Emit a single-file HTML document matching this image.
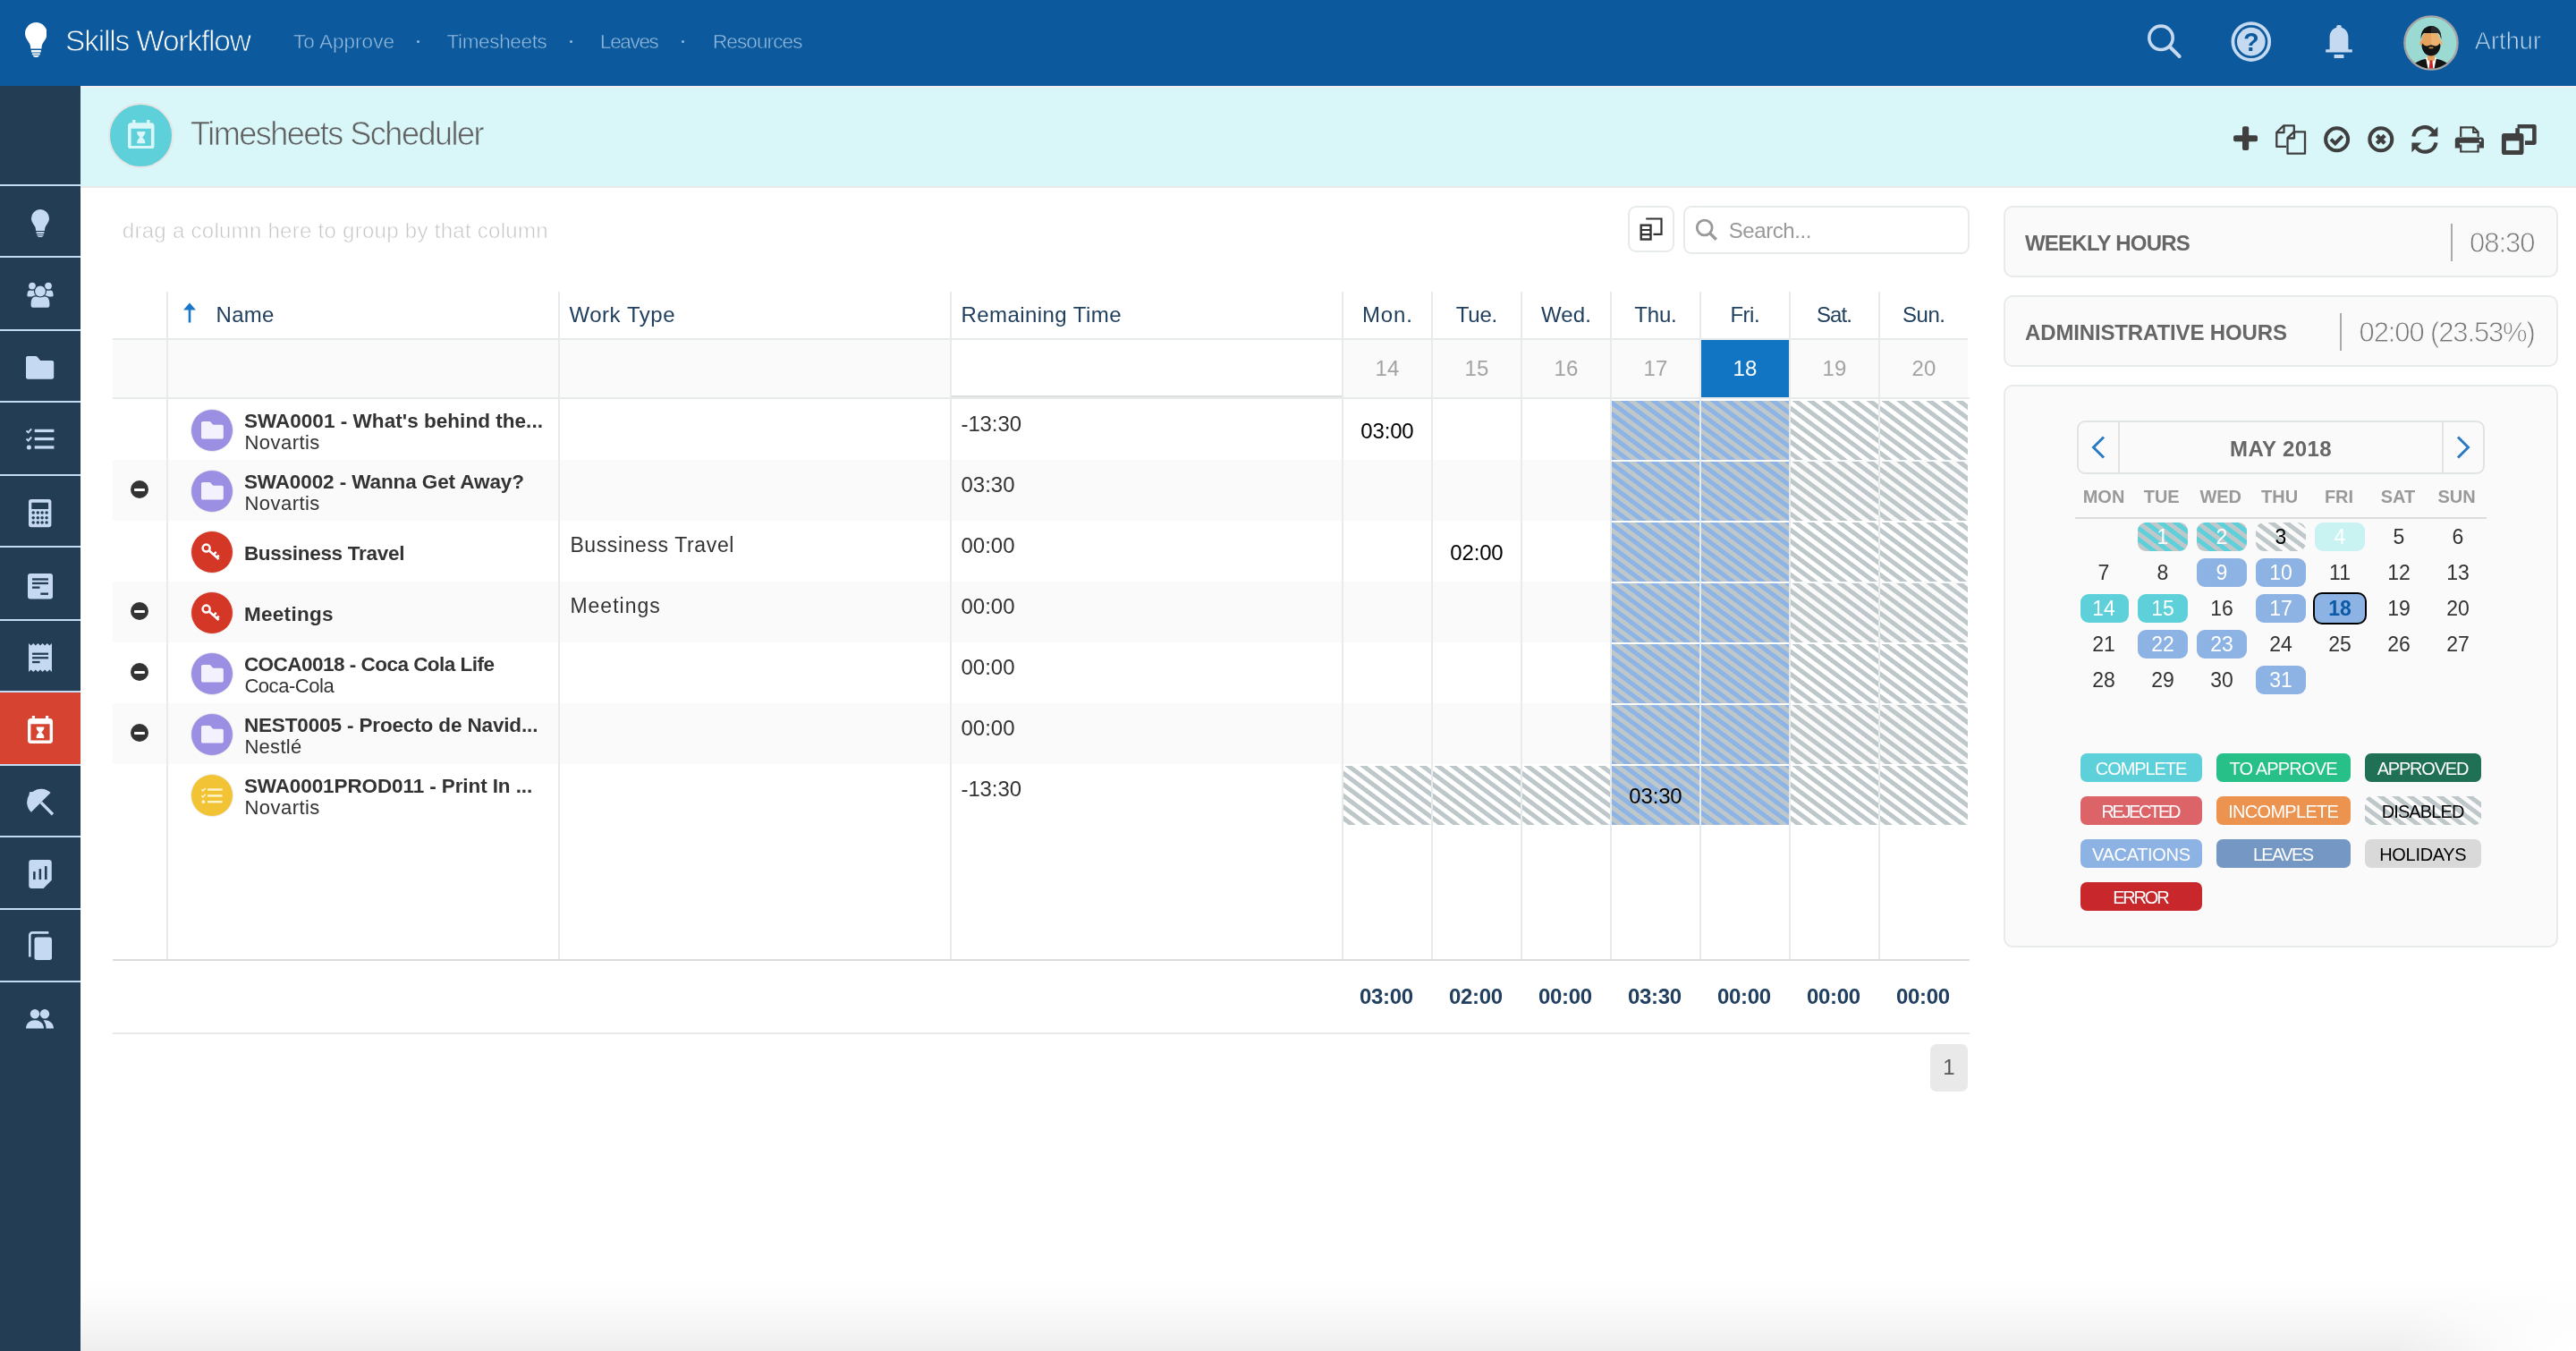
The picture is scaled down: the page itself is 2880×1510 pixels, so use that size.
<!DOCTYPE html>
<html lang="en"><head><meta charset="utf-8"><title>Timesheets Scheduler - Skills Workflow</title>
<style>
html,body{margin:0;padding:0;}
body{width:2880px;height:1510px;overflow:hidden;background:#fff;position:relative;font-family:"Liberation Sans", sans-serif;}
#app{position:absolute;left:0;top:0;width:2880px;height:1510px;will-change:transform;}
.t{position:absolute;white-space:nowrap;line-height:1;font-family:"Liberation Sans", sans-serif;}
.b{position:absolute;box-sizing:border-box;}

.st-b{background:repeating-linear-gradient(37deg,#8db4e4 0,#8db4e4 3.2px,#bec7c9 3.8px,#bec7c9 8.2px,#8db4e4 8.8px,#8db4e4 10px);}
.st-w{background:repeating-linear-gradient(37deg,rgba(190,199,201,0) 0,rgba(190,199,201,0) 3.2px,#bec7c9 3.8px,#bec7c9 8.2px,rgba(190,199,201,0) 8.8px,rgba(190,199,201,0) 10px);}
.st-t{background:repeating-linear-gradient(37deg,#5dd0d9 0,#5dd0d9 3.2px,#bec7c9 3.8px,#bec7c9 8.2px,#5dd0d9 8.8px,#5dd0d9 10px);}

@media (max-width:1600px){#app{transform:scale(.5);transform-origin:0 0;}}
</style></head><body>
<div id="app">
<div class="b" style="left:0px;top:0px;width:2880px;height:96px;background:#0c5a9d;"></div>
<div class="b" style="left:90px;top:96px;width:2790px;height:112px;background:#d9f6f9;"></div>
<div class="b" style="left:90px;top:208px;width:2790px;height:2px;background:#e9e9e9;"></div>
<div class="b" style="left:90px;top:96px;width:2790px;height:2px;background:#f1efef;"></div>
<div class="b" style="left:90px;top:1428px;width:2790px;height:82px;background:linear-gradient(to bottom,#ffffff 0,#fdfdfd 25%,#f8f8f8 55%,#f2f2f2 82%,#eeeeee 100%);"></div>
<div class="b" style="left:2600px;top:1428px;width:280px;height:82px;background:radial-gradient(ellipse 200px 100px at 100% 100%,#fff 0,rgba(255,255,255,.8) 35%,rgba(255,255,255,0) 100%);"></div>
<div class="b" style="left:0px;top:96px;width:90px;height:1414px;background:#233d54;"></div>
<div class="b" style="left:0px;top:206px;width:90px;height:2px;background:#c5dcf5;"></div>
<div class="b" style="left:0px;top:286px;width:90px;height:2px;background:#c5dcf5;"></div>
<div class="b" style="left:0px;top:368px;width:90px;height:2px;background:#c5dcf5;"></div>
<div class="b" style="left:0px;top:448px;width:90px;height:2px;background:#c5dcf5;"></div>
<div class="b" style="left:0px;top:530px;width:90px;height:2px;background:#c5dcf5;"></div>
<div class="b" style="left:0px;top:610px;width:90px;height:2px;background:#c5dcf5;"></div>
<div class="b" style="left:0px;top:692px;width:90px;height:2px;background:#c5dcf5;"></div>
<div class="b" style="left:0px;top:772px;width:90px;height:2px;background:#c5dcf5;"></div>
<div class="b" style="left:0px;top:854px;width:90px;height:2px;background:#c5dcf5;"></div>
<div class="b" style="left:0px;top:934px;width:90px;height:2px;background:#c5dcf5;"></div>
<div class="b" style="left:0px;top:1015px;width:90px;height:2px;background:#c5dcf5;"></div>
<div class="b" style="left:0px;top:1096px;width:90px;height:2px;background:#c5dcf5;"></div>
<div class="b" style="left:0px;top:774px;width:90px;height:80px;background:#d64431;"></div>
<div class="t" style="left:73.0px;top:29px;font-size:33.5px;color:#fff;letter-spacing:-1.19px;-webkit-text-stroke:.9px #0c5a9d;">Skills Workflow</div>
<div class="t" style="left:328.0px;top:36px;font-size:22.5px;color:#96bbde;letter-spacing:0.04px;-webkit-text-stroke:.5px #0c5a9d;">To Approve</div>
<div class="t" style="left:499.5px;top:36px;font-size:22.5px;color:#96bbde;letter-spacing:-0.35px;-webkit-text-stroke:.5px #0c5a9d;">Timesheets</div>
<div class="t" style="left:671.0px;top:36px;font-size:22.5px;color:#96bbde;letter-spacing:-1.35px;-webkit-text-stroke:.5px #0c5a9d;">Leaves</div>
<div class="t" style="left:796.9px;top:36px;font-size:22.5px;color:#96bbde;letter-spacing:-0.87px;-webkit-text-stroke:.5px #0c5a9d;">Resources</div>
<div class="b" style="left:466.2px;top:44.5px;width:3px;height:3px;background:#96bbde;border-radius:50%;"></div>
<div class="b" style="left:636.9px;top:44.5px;width:3px;height:3px;background:#96bbde;border-radius:50%;"></div>
<div class="b" style="left:762.4px;top:44.5px;width:3px;height:3px;background:#96bbde;border-radius:50%;"></div>
<div class="t" style="left:2766.8px;top:33px;font-size:27px;color:#c5daf0;letter-spacing:0.13px;-webkit-text-stroke:.8px #0c5a9d;">Arthur</div>
<div class="b" style="left:120.5px;top:114.5px;width:73px;height:73px;background:#5dd0d9;border-radius:50%;border:2px solid #e6e4e4;"></div>
<div class="t" style="left:213.0px;top:132px;font-size:36px;color:#606060;letter-spacing:-1.49px;-webkit-text-stroke:.7px #d9f6f9;">Timesheets Scheduler</div>
<div class="t" style="left:136.8px;top:246px;font-size:24px;color:#c6c6c6;letter-spacing:0.28px;-webkit-text-stroke:.6px #fff;">drag a column here to group by that column</div>
<div class="b" style="left:1820px;top:230px;width:52px;height:52px;background:#fff;border:2px solid #e8ebeb;border-radius:9px;"></div>
<div class="b" style="left:1882px;top:230px;width:320px;height:54px;background:#fff;border:2px solid #e8ebeb;border-radius:9px;"></div>
<div class="t" style="left:1932.7px;top:246px;font-size:24px;color:#999;letter-spacing:-0.41px;">Search...</div>
<div class="b" style="left:126px;top:378px;width:2074px;height:2px;background:#e8ebeb;"></div>
<div class="b" style="left:126px;top:380px;width:2074px;height:64px;background:#fafafa;"></div>
<div class="b" style="left:1064px;top:380px;width:436px;height:62px;background:#fff;"></div>
<div class="b" style="left:1064px;top:442px;width:436px;height:2px;background:#dedede;"></div>
<div class="b" style="left:126px;top:444px;width:2076px;height:2px;background:#e8ebeb;"></div>
<div class="b" style="left:126px;top:514px;width:2074px;height:68px;background:#fafafa;"></div>
<div class="b" style="left:126px;top:650px;width:2074px;height:68px;background:#fafafa;"></div>
<div class="b" style="left:126px;top:786px;width:2074px;height:68px;background:#fafafa;"></div>
<div class="b" style="left:1902px;top:380px;width:98px;height:64px;background:#1175c4;"></div>
<div class="b st-b" style="left:1802px;top:448px;width:98px;height:66px"></div>
<div class="b st-b" style="left:1902px;top:448px;width:98px;height:66px"></div>
<div class="b st-w" style="left:2002px;top:448px;width:98px;height:66px"></div>
<div class="b st-w" style="left:2102px;top:448px;width:98px;height:66px"></div>
<div class="b st-b" style="left:1802px;top:516px;width:98px;height:66px"></div>
<div class="b st-b" style="left:1902px;top:516px;width:98px;height:66px"></div>
<div class="b st-w" style="left:2002px;top:516px;width:98px;height:66px"></div>
<div class="b st-w" style="left:2102px;top:516px;width:98px;height:66px"></div>
<div class="b st-b" style="left:1802px;top:584px;width:98px;height:66px"></div>
<div class="b st-b" style="left:1902px;top:584px;width:98px;height:66px"></div>
<div class="b st-w" style="left:2002px;top:584px;width:98px;height:66px"></div>
<div class="b st-w" style="left:2102px;top:584px;width:98px;height:66px"></div>
<div class="b st-b" style="left:1802px;top:652px;width:98px;height:66px"></div>
<div class="b st-b" style="left:1902px;top:652px;width:98px;height:66px"></div>
<div class="b st-w" style="left:2002px;top:652px;width:98px;height:66px"></div>
<div class="b st-w" style="left:2102px;top:652px;width:98px;height:66px"></div>
<div class="b st-b" style="left:1802px;top:720px;width:98px;height:66px"></div>
<div class="b st-b" style="left:1902px;top:720px;width:98px;height:66px"></div>
<div class="b st-w" style="left:2002px;top:720px;width:98px;height:66px"></div>
<div class="b st-w" style="left:2102px;top:720px;width:98px;height:66px"></div>
<div class="b st-b" style="left:1802px;top:788px;width:98px;height:66px"></div>
<div class="b st-b" style="left:1902px;top:788px;width:98px;height:66px"></div>
<div class="b st-w" style="left:2002px;top:788px;width:98px;height:66px"></div>
<div class="b st-w" style="left:2102px;top:788px;width:98px;height:66px"></div>
<div class="b st-w" style="left:1502px;top:856px;width:98px;height:66px"></div>
<div class="b st-w" style="left:1602px;top:856px;width:98px;height:66px"></div>
<div class="b st-w" style="left:1702px;top:856px;width:98px;height:66px"></div>
<div class="b st-b" style="left:1802px;top:856px;width:98px;height:66px"></div>
<div class="b st-b" style="left:1902px;top:856px;width:98px;height:66px"></div>
<div class="b st-w" style="left:2002px;top:856px;width:98px;height:66px"></div>
<div class="b st-w" style="left:2102px;top:856px;width:98px;height:66px"></div>
<div class="b" style="left:186px;top:326px;width:2px;height:748px;background:#e8ebeb;"></div>
<div class="b" style="left:624px;top:326px;width:2px;height:748px;background:#e8ebeb;"></div>
<div class="b" style="left:1062px;top:326px;width:2px;height:748px;background:#e8ebeb;"></div>
<div class="b" style="left:1500px;top:326px;width:2px;height:748px;background:#e8ebeb;"></div>
<div class="b" style="left:1600px;top:326px;width:2px;height:748px;background:#e8ebeb;"></div>
<div class="b" style="left:1700px;top:326px;width:2px;height:748px;background:#e8ebeb;"></div>
<div class="b" style="left:1800px;top:326px;width:2px;height:748px;background:#e8ebeb;"></div>
<div class="b" style="left:1900px;top:326px;width:2px;height:748px;background:#e8ebeb;"></div>
<div class="b" style="left:2000px;top:326px;width:2px;height:748px;background:#e8ebeb;"></div>
<div class="b" style="left:2100px;top:326px;width:2px;height:748px;background:#e8ebeb;"></div>
<div class="b" style="left:126px;top:1072px;width:2076px;height:2px;background:#dcdcdc;"></div>
<div class="b" style="left:126px;top:1154px;width:2076px;height:2px;background:#e8e8e8;"></div>
<div class="b" style="left:2158px;top:1167px;width:42px;height:53px;background:#e9e9e9;border-radius:7px;"></div>
<div class="t" style="left:2172.3px;top:1181px;font-size:24px;color:#555;">1</div>
<div class="t" style="left:241.6px;top:340px;font-size:24px;color:#21405f;letter-spacing:0.26px;">Name</div>
<div class="t" style="left:636.5px;top:340px;font-size:24px;color:#21405f;letter-spacing:0.52px;">Work Type</div>
<div class="t" style="left:1074.5px;top:340px;font-size:24px;color:#21405f;letter-spacing:0.43px;">Remaining Time</div>
<div class="t" style="left:1523.0px;top:340px;font-size:24px;color:#21405f;letter-spacing:0.88px;">Mon.</div>
<div class="t" style="left:1537.6px;top:400px;font-size:24px;color:#a3a3a3;">14</div>
<div class="t" style="left:1627.8px;top:340px;font-size:24px;color:#21405f;letter-spacing:-0.25px;">Tue.</div>
<div class="t" style="left:1637.6px;top:400px;font-size:24px;color:#a3a3a3;">15</div>
<div class="t" style="left:1723.0px;top:340px;font-size:24px;color:#21405f;letter-spacing:0.14px;">Wed.</div>
<div class="t" style="left:1737.6px;top:400px;font-size:24px;color:#a3a3a3;">16</div>
<div class="t" style="left:1827.3px;top:340px;font-size:24px;color:#21405f;letter-spacing:-0.21px;">Thu.</div>
<div class="t" style="left:1837.6px;top:400px;font-size:24px;color:#a3a3a3;">17</div>
<div class="t" style="left:1934.4px;top:340px;font-size:24px;color:#21405f;letter-spacing:-0.49px;">Fri.</div>
<div class="t" style="left:1937.6px;top:400px;font-size:24px;color:#fff;">18</div>
<div class="t" style="left:2031.0px;top:340px;font-size:24px;color:#21405f;letter-spacing:-0.90px;">Sat.</div>
<div class="t" style="left:2037.6px;top:400px;font-size:24px;color:#a3a3a3;">19</div>
<div class="t" style="left:2127.0px;top:340px;font-size:24px;color:#21405f;letter-spacing:-0.46px;">Sun.</div>
<div class="t" style="left:2137.6px;top:400px;font-size:24px;color:#a3a3a3;">20</div>
<svg class="b" style="left:204px;top:338px;" width="16" height="24" viewBox="0 0 16 24"><path d="M8 0.5 L15 8.5 H9.3 V22.5 H6.7 V8.5 H1 Z" fill="#1976c8"/></svg>
<div class="b" style="left:213px;top:457px;width:48px;height:48px;background:#9b8fe3;border-radius:50%;border:1.5px solid #ececec;"></div>
<div class="t" style="left:272.9px;top:460px;font-size:22.5px;color:#333;font-weight:700;letter-spacing:0.04px;">SWA0001 - What's behind the...</div>
<div class="t" style="left:273.4px;top:484px;font-size:22px;color:#333;letter-spacing:0.47px;">Novartis</div>
<div class="t" style="left:1074.5px;top:462px;font-size:24px;color:#333;letter-spacing:-0.11px;">-13:30</div>
<div class="b" style="left:213px;top:525px;width:48px;height:48px;background:#9b8fe3;border-radius:50%;border:1.5px solid #ececec;"></div>
<div class="b" style="left:146px;top:537.3px;width:20px;height:20px;background:#333;border-radius:50%;"></div>
<div class="b" style="left:150px;top:545.6px;width:12px;height:3.4px;background:#fff;border-radius:1px;"></div>
<div class="t" style="left:272.9px;top:528px;font-size:22.5px;color:#333;font-weight:700;letter-spacing:-0.10px;">SWA0002 - Wanna Get Away?</div>
<div class="t" style="left:273.4px;top:552px;font-size:22px;color:#333;letter-spacing:0.47px;">Novartis</div>
<div class="t" style="left:1074.5px;top:530px;font-size:24px;color:#333;letter-spacing:-0.02px;">03:30</div>
<div class="b" style="left:213px;top:593px;width:48px;height:48px;background:#d43726;border-radius:50%;border:1.5px solid #ececec;"></div>
<div class="t" style="left:272.9px;top:608px;font-size:22.5px;color:#333;font-weight:700;letter-spacing:-0.29px;">Bussiness Travel</div>
<div class="t" style="left:637.4px;top:598px;font-size:23px;color:#333;letter-spacing:0.61px;">Bussiness Travel</div>
<div class="t" style="left:1074.5px;top:598px;font-size:24px;color:#333;letter-spacing:-0.02px;">00:00</div>
<div class="b" style="left:213px;top:661px;width:48px;height:48px;background:#d43726;border-radius:50%;border:1.5px solid #ececec;"></div>
<div class="b" style="left:146px;top:673.3px;width:20px;height:20px;background:#333;border-radius:50%;"></div>
<div class="b" style="left:150px;top:681.6px;width:12px;height:3.4px;background:#fff;border-radius:1px;"></div>
<div class="t" style="left:272.9px;top:676px;font-size:22.5px;color:#333;font-weight:700;letter-spacing:0.31px;">Meetings</div>
<div class="t" style="left:637.4px;top:666px;font-size:23px;color:#333;letter-spacing:1.01px;">Meetings</div>
<div class="t" style="left:1074.5px;top:666px;font-size:24px;color:#333;letter-spacing:-0.02px;">00:00</div>
<div class="b" style="left:213px;top:729px;width:48px;height:48px;background:#9b8fe3;border-radius:50%;border:1.5px solid #ececec;"></div>
<div class="b" style="left:146px;top:741.3px;width:20px;height:20px;background:#333;border-radius:50%;"></div>
<div class="b" style="left:150px;top:749.6px;width:12px;height:3.4px;background:#fff;border-radius:1px;"></div>
<div class="t" style="left:272.9px;top:732px;font-size:22.5px;color:#333;font-weight:700;letter-spacing:-0.52px;">COCA0018 - Coca Cola Life</div>
<div class="t" style="left:273.4px;top:756px;font-size:22px;color:#333;letter-spacing:-0.45px;">Coca-Cola</div>
<div class="t" style="left:1074.5px;top:734px;font-size:24px;color:#333;letter-spacing:-0.02px;">00:00</div>
<div class="b" style="left:213px;top:797px;width:48px;height:48px;background:#9b8fe3;border-radius:50%;border:1.5px solid #ececec;"></div>
<div class="b" style="left:146px;top:809.3px;width:20px;height:20px;background:#333;border-radius:50%;"></div>
<div class="b" style="left:150px;top:817.6px;width:12px;height:3.4px;background:#fff;border-radius:1px;"></div>
<div class="t" style="left:272.9px;top:800px;font-size:22.5px;color:#333;font-weight:700;letter-spacing:-0.14px;">NEST0005 - Proecto de Navid...</div>
<div class="t" style="left:273.4px;top:824px;font-size:22px;color:#333;letter-spacing:0.29px;">Nestlé</div>
<div class="t" style="left:1074.5px;top:802px;font-size:24px;color:#333;letter-spacing:-0.02px;">00:00</div>
<div class="b" style="left:213px;top:865px;width:48px;height:48px;background:#f2c435;border-radius:50%;border:1.5px solid #ececec;"></div>
<div class="t" style="left:272.9px;top:868px;font-size:22.5px;color:#333;font-weight:700;letter-spacing:-0.10px;">SWA0001PROD011 - Print In ...</div>
<div class="t" style="left:273.4px;top:892px;font-size:22px;color:#333;letter-spacing:0.47px;">Novartis</div>
<div class="t" style="left:1074.5px;top:870px;font-size:24px;color:#333;letter-spacing:-0.11px;">-13:30</div>
<div class="t" style="left:1521.3px;top:470px;font-size:24px;color:#000;letter-spacing:-0.17px;">03:00</div>
<div class="t" style="left:1621.3px;top:606px;font-size:24px;color:#000;letter-spacing:-0.17px;">02:00</div>
<div class="t" style="left:1821.3px;top:878px;font-size:24px;color:#000;letter-spacing:-0.17px;">03:30</div>
<div class="t" style="left:1520.0px;top:1102px;font-size:24px;color:#21405f;font-weight:700;letter-spacing:-0.35px;">03:00</div>
<div class="t" style="left:1620.0px;top:1102px;font-size:24px;color:#21405f;font-weight:700;letter-spacing:-0.35px;">02:00</div>
<div class="t" style="left:1720.0px;top:1102px;font-size:24px;color:#21405f;font-weight:700;letter-spacing:-0.35px;">00:00</div>
<div class="t" style="left:1820.0px;top:1102px;font-size:24px;color:#21405f;font-weight:700;letter-spacing:-0.35px;">03:30</div>
<div class="t" style="left:1920.0px;top:1102px;font-size:24px;color:#21405f;font-weight:700;letter-spacing:-0.35px;">00:00</div>
<div class="t" style="left:2020.0px;top:1102px;font-size:24px;color:#21405f;font-weight:700;letter-spacing:-0.35px;">00:00</div>
<div class="t" style="left:2120.0px;top:1102px;font-size:24px;color:#21405f;font-weight:700;letter-spacing:-0.35px;">00:00</div>
<div class="b" style="left:2240px;top:230px;width:620px;height:80px;background:#fafafa;border:2px solid #e8ebeb;border-radius:10px;"></div>
<div class="b" style="left:2240px;top:330px;width:620px;height:80px;background:#fafafa;border:2px solid #e8ebeb;border-radius:10px;"></div>
<div class="b" style="left:2240px;top:430px;width:620px;height:629px;background:#fafafa;border:2px solid #e8ebeb;border-radius:10px;"></div>
<div class="t" style="left:2264.0px;top:260px;font-size:24px;color:#666;font-weight:700;letter-spacing:-0.78px;">WEEKLY HOURS</div>
<div class="b" style="left:2740px;top:250px;width:2px;height:42px;background:#ababab;"></div>
<div class="t" style="left:2761.0px;top:256px;font-size:31px;color:#777;letter-spacing:-1.04px;-webkit-text-stroke:.8px #fafafa;">08:30</div>
<div class="t" style="left:2264.0px;top:360px;font-size:24px;color:#666;font-weight:700;letter-spacing:-0.14px;">ADMINISTRATIVE HOURS</div>
<div class="b" style="left:2616px;top:350px;width:2px;height:42px;background:#ababab;"></div>
<div class="t" style="left:2637.6px;top:356px;font-size:31px;color:#777;letter-spacing:-1.13px;-webkit-text-stroke:.8px #fafafa;">02:00 (23.53%)</div>
<div class="b" style="left:2322px;top:470px;width:456px;height:60px;background:#fafafa;border:2px solid #e1e4e4;border-radius:9px;"></div>
<div class="b" style="left:2368px;top:472px;width:2px;height:56px;background:#e1e4e4;"></div>
<div class="b" style="left:2730px;top:472px;width:2px;height:56px;background:#e1e4e4;"></div>
<div class="t" style="left:2493.0px;top:490px;font-size:24px;color:#666;font-weight:700;letter-spacing:0.42px;">MAY 2018</div>
<svg class="b" style="left:2334px;top:484px;" width="24" height="32" viewBox="0 0 24 32"><path d="M18 4.5 L6.5 16 L18 27.5" fill="none" stroke="#2b7bc4" stroke-width="3"/></svg>
<svg class="b" style="left:2742px;top:484px;" width="24" height="32" viewBox="0 0 24 32"><path d="M6 4.5 L17.5 16 L6 27.5" fill="none" stroke="#2b7bc4" stroke-width="3"/></svg>
<div class="t" style="left:2328.7px;top:545px;font-size:20px;color:#999;font-weight:700;">MON</div>
<div class="t" style="left:2396.7px;top:545px;font-size:20px;color:#999;font-weight:700;">TUE</div>
<div class="t" style="left:2459.4px;top:545px;font-size:20px;color:#999;font-weight:700;">WED</div>
<div class="t" style="left:2528.0px;top:545px;font-size:20px;color:#999;font-weight:700;">THU</div>
<div class="t" style="left:2598.9px;top:545px;font-size:20px;color:#999;font-weight:700;">FRI</div>
<div class="t" style="left:2661.7px;top:545px;font-size:20px;color:#999;font-weight:700;">SAT</div>
<div class="t" style="left:2725.5px;top:545px;font-size:20px;color:#999;font-weight:700;">SUN</div>
<div class="b" style="left:2320px;top:578px;width:460px;height:2px;background:#dcdcdc;"></div>
<div class="b st-t" style="left:2390px;top:584px;width:56px;height:32px;border-radius:9px"></div>
<div class="t" style="left:2411.6px;top:589px;font-size:23px;color:#fff;">1</div>
<div class="b st-t" style="left:2456px;top:584px;width:56px;height:32px;border-radius:9px"></div>
<div class="t" style="left:2477.6px;top:589px;font-size:23px;color:#fff;">2</div>
<div class="b st-w" style="left:2522px;top:584px;width:56px;height:32px;border-radius:9px"></div>
<div class="t" style="left:2543.6px;top:589px;font-size:23px;color:#000;">3</div>
<div class="b" style="left:2588px;top:584px;width:56px;height:32px;background:#c9f3f3;border-radius:9px;"></div>
<div class="t" style="left:2609.6px;top:589px;font-size:23px;color:#fff;">4</div>
<div class="t" style="left:2675.6px;top:589px;font-size:23px;color:#333;">5</div>
<div class="t" style="left:2741.6px;top:589px;font-size:23px;color:#333;">6</div>
<div class="t" style="left:2345.6px;top:629px;font-size:23px;color:#333;">7</div>
<div class="t" style="left:2411.6px;top:629px;font-size:23px;color:#333;">8</div>
<div class="b" style="left:2456px;top:624px;width:56px;height:32px;background:#8db3e4;border-radius:9px;"></div>
<div class="t" style="left:2477.6px;top:629px;font-size:23px;color:#fff;">9</div>
<div class="b" style="left:2522px;top:624px;width:56px;height:32px;background:#8db3e4;border-radius:9px;"></div>
<div class="t" style="left:2537.2px;top:629px;font-size:23px;color:#fff;">10</div>
<div class="t" style="left:2604.1px;top:629px;font-size:23px;color:#333;">11</div>
<div class="t" style="left:2669.2px;top:629px;font-size:23px;color:#333;">12</div>
<div class="t" style="left:2735.2px;top:629px;font-size:23px;color:#333;">13</div>
<div class="b" style="left:2326px;top:664px;width:54px;height:32px;background:#5dd0d9;border-radius:9px;"></div>
<div class="t" style="left:2339.2px;top:669px;font-size:23px;color:#fff;">14</div>
<div class="b" style="left:2390px;top:664px;width:56px;height:32px;background:#5dd0d9;border-radius:9px;"></div>
<div class="t" style="left:2405.2px;top:669px;font-size:23px;color:#fff;">15</div>
<div class="t" style="left:2471.2px;top:669px;font-size:23px;color:#333;">16</div>
<div class="b" style="left:2522px;top:664px;width:56px;height:32px;background:#8db3e4;border-radius:9px;"></div>
<div class="t" style="left:2537.2px;top:669px;font-size:23px;color:#fff;">17</div>
<div class="b" style="left:2586px;top:662px;width:60px;height:36px;background:#8db3e4;border:2.5px solid #000;border-radius:10px;"></div>
<div class="t" style="left:2603.2px;top:669px;font-size:23px;color:#0b5aa5;font-weight:700;">18</div>
<div class="t" style="left:2669.2px;top:669px;font-size:23px;color:#333;">19</div>
<div class="t" style="left:2735.2px;top:669px;font-size:23px;color:#333;">20</div>
<div class="t" style="left:2339.2px;top:709px;font-size:23px;color:#333;">21</div>
<div class="b" style="left:2390px;top:704px;width:56px;height:32px;background:#8db3e4;border-radius:9px;"></div>
<div class="t" style="left:2405.2px;top:709px;font-size:23px;color:#fff;">22</div>
<div class="b" style="left:2456px;top:704px;width:56px;height:32px;background:#8db3e4;border-radius:9px;"></div>
<div class="t" style="left:2471.2px;top:709px;font-size:23px;color:#fff;">23</div>
<div class="t" style="left:2537.2px;top:709px;font-size:23px;color:#333;">24</div>
<div class="t" style="left:2603.2px;top:709px;font-size:23px;color:#333;">25</div>
<div class="t" style="left:2669.2px;top:709px;font-size:23px;color:#333;">26</div>
<div class="t" style="left:2735.2px;top:709px;font-size:23px;color:#333;">27</div>
<div class="t" style="left:2339.2px;top:749px;font-size:23px;color:#333;">28</div>
<div class="t" style="left:2405.2px;top:749px;font-size:23px;color:#333;">29</div>
<div class="t" style="left:2471.2px;top:749px;font-size:23px;color:#333;">30</div>
<div class="b" style="left:2522px;top:744px;width:56px;height:32px;background:#8db3e4;border-radius:9px;"></div>
<div class="t" style="left:2537.2px;top:749px;font-size:23px;color:#fff;">31</div>
<div class="b" style="left:2326px;top:842px;width:136px;height:32px;background:#5dd0d9;border-radius:7px;"></div>
<div class="t" style="left:2342.8px;top:849px;font-size:20px;color:#fff;letter-spacing:-1.08px;">COMPLETE</div>
<div class="b" style="left:2478px;top:842px;width:150px;height:32px;background:#27c088;border-radius:7px;"></div>
<div class="t" style="left:2492.4px;top:849px;font-size:20px;color:#fff;letter-spacing:-0.82px;">TO APPROVE</div>
<div class="b" style="left:2644px;top:842px;width:130px;height:32px;background:#1f7055;border-radius:7px;"></div>
<div class="t" style="left:2657.7px;top:849px;font-size:20px;color:#fff;letter-spacing:-1.21px;">APPROVED</div>
<div class="b" style="left:2326px;top:890px;width:136px;height:32px;background:#dc6468;border-radius:7px;"></div>
<div class="t" style="left:2349.4px;top:897px;font-size:20px;color:#fff;letter-spacing:-2.35px;">REJECTED</div>
<div class="b" style="left:2478px;top:890px;width:150px;height:32px;background:#ec9350;border-radius:7px;"></div>
<div class="t" style="left:2491.2px;top:897px;font-size:20px;color:#fff;letter-spacing:-0.70px;">INCOMPLETE</div>
<div class="b st-w" style="left:2644px;top:890px;width:130px;height:32px;border-radius:7px"></div>
<div class="t" style="left:2662.7px;top:897px;font-size:20px;color:#000;letter-spacing:-0.89px;">DISABLED</div>
<div class="b" style="left:2326px;top:938px;width:136px;height:32px;background:#8db3e4;border-radius:7px;"></div>
<div class="t" style="left:2339.0px;top:945px;font-size:20px;color:#fff;letter-spacing:-0.33px;">VACATIONS</div>
<div class="b" style="left:2478px;top:938px;width:150px;height:32px;background:#7597c3;border-radius:7px;"></div>
<div class="t" style="left:2518.9px;top:945px;font-size:20px;color:#fff;letter-spacing:-1.65px;">LEAVES</div>
<div class="b" style="left:2644px;top:938px;width:130px;height:32px;background:#d9d9d9;border-radius:7px;"></div>
<div class="t" style="left:2660.2px;top:945px;font-size:20px;color:#000;letter-spacing:-0.31px;">HOLIDAYS</div>
<div class="b" style="left:2326px;top:986px;width:136px;height:32px;background:#c8282c;border-radius:7px;"></div>
<div class="t" style="left:2362.2px;top:993px;font-size:20px;color:#fff;letter-spacing:-2.18px;">ERROR</div>
<svg class="b" style="left:34.8px;top:233.8px;" width="20" height="31.4" viewBox="0 0 20 31.4"><g fill="#c5daf2"><path d="M10 0a10 10 0 0 1 10 10c0 4-2.6 6.6-4.1 9.2c-.8 1.5-.9 3-.9 4.7h-10c0-1.7-.1-3.2-.9-4.7C2.6 16.6 0 14 0 10A10 10 0 0 1 10 0z"/><rect x="5.6" y="25.1" width="8.8" height="2"/><rect x="6.4" y="27.9" width="7.2" height="1.5"/><path d="M7.3 30h5.4a2.7 1.5 0 0 1-5.4 0z"/></g></svg>
<svg class="b" style="left:27.7px;top:25px;" width="24.7" height="38.8" viewBox="0 0 20 31.4"><g fill="#fff"><path d="M10 0a10 10 0 0 1 10 10c0 4-2.6 6.6-4.1 9.2c-.8 1.5-.9 3-.9 4.7h-10c0-1.7-.1-3.2-.9-4.7C2.6 16.6 0 14 0 10A10 10 0 0 1 10 0z"/><rect x="5.6" y="25.1" width="8.8" height="2"/><rect x="6.4" y="27.9" width="7.2" height="1.5"/><path d="M7.3 30h5.4a2.7 1.5 0 0 1-5.4 0z"/></g></svg>
<svg class="b" style="left:29px;top:314px;" width="32" height="31" viewBox="0 0 32 31"><g fill="#c5daf2" stroke="#233d54" stroke-width="1.2">
<path d="M0.8 16.2c0-3.6 1.6-6 3.2-6.2h6.4c1.6.2 2.6 2 2.6 4v2.2c0 1.6-1.2 2-2.4 2H3.2c-1.4 0-2.4-.6-2.4-2z"/>
<path d="M31.2 16.2c0-3.6-1.6-6-3.2-6.2h-6.4c-1.6.2-2.6 2-2.6 4v2.2c0 1.6 1.2 2 2.4 2h7.4c1.4 0 2.4-.6 2.4-2z"/>
<circle cx="7" cy="5.6" r="4.5"/><circle cx="25" cy="5.6" r="4.5"/>
<path d="M5 25.2c0-5.4 2.6-8.4 5.4-8.4h11.2c2.8 0 5.4 3 5.4 8.4v2.4c0 1.8-1.2 2.8-2.8 2.8H7.800000000000001C6.2 30.4 5 29.4 5 27.6z"/>
<circle cx="16" cy="11.5" r="6.5"/></g></svg>
<svg class="b" style="left:29px;top:398px;" width="32" height="26" viewBox="0 0 32 26"><path fill="#c5daf2" d="M2.2 0h8.6c.8 0 1.3.3 1.8.8l3.6 4.1H29c1.300000000000001 0 2.2.9 2.2 2.2v16.4c0 1.3-.9 2.2-2.2 2.2H2.2C.9 25.700000000000003 0 24.8 0 23.5V2.2C0 .9.9 0 2.2 0z"/></svg>
<svg class="b" style="left:29px;top:478px;" width="32" height="26" viewBox="0 0 32 26"><g fill="#c5daf2"><rect x="9.7" y="1.8" width="21.7" height="3.3"/><rect x="9.7" y="10.9" width="21.7" height="3.3"/><rect x="9.7" y="20.3" width="21.7" height="3.3"/>
<circle cx="3.4" cy="22" r="2.5"/></g>
<g fill="none" stroke="#c5daf2" stroke-width="1.9"><path d="M0.6 3.4l2 2l3.6-4"/><path d="M0.6 12.5l2 2l3.6-4"/></g></svg>
<svg class="b" style="left:32px;top:557.7px;" width="26" height="32" viewBox="0 0 26 32"><rect x="0" y="0" width="25.4" height="31.3" rx="3" fill="#c5daf2"/><g fill="#233d54"><rect x="3.3" y="3.8" width="18.8" height="7.3" rx=".6"/><circle cx="5.2" cy="15.1" r="1.75"/><circle cx="10.3" cy="15.1" r="1.75"/><circle cx="15.1" cy="15.1" r="1.75"/><circle cx="20.1" cy="15.1" r="1.75"/><circle cx="5.2" cy="20.7" r="1.75"/><circle cx="10.3" cy="20.7" r="1.75"/><circle cx="15.1" cy="20.7" r="1.75"/><circle cx="20.1" cy="20.7" r="1.75"/><circle cx="5.2" cy="25.9" r="1.75"/><circle cx="10.3" cy="25.9" r="1.75"/><circle cx="15.1" cy="25.9" r="1.75"/><circle cx="20.1" cy="25.9" r="1.75"/></g></svg>
<svg class="b" style="left:31px;top:640.5px;" width="28" height="29" viewBox="0 0 28 29"><rect width="28" height="28.5" rx="3" fill="#c5daf2"/><g fill="#233d54"><rect x="5" y="5.3" width="18" height="2.3"/><rect x="5" y="9.8" width="18" height="2.3"/><rect x="5" y="14.5" width="8.5" height="2.3"/><rect x="14.3" y="21.5" width="8.7" height="2.4"/></g></svg>
<svg class="b" style="left:32px;top:718.7px;" width="26" height="32" viewBox="0 0 25.9 32"><path fill="#c5daf2" d="M0 0 L2.59 2.6 L5.18 0 L7.77 2.6 L10.36 0 L12.95 2.6 L15.54 0 L18.13 2.6 L20.72 0 L23.31 2.6 L25.90 0 L25.9 32 L23.31 29.4 L20.72 32 L18.13 29.4 L15.54 32 L12.95 29.4 L10.36 32 L7.77 29.4 L5.18 32 L2.59 29.4 L0.00 32 Z"/><g fill="#233d54"><rect x="4" y="10.6" width="18" height="2.3"/><rect x="4" y="15.1" width="18" height="2.3"/><rect x="4" y="19.9" width="8.5" height="2.3"/></g></svg>
<svg class="b" style="left:30.9px;top:799.6px;" width="28" height="31" viewBox="0 0 28 31"><path fill="#fff" fill-rule="evenodd" d="M4.8 0h3.2v3h12v-3h3.2v3h1.6c1.8 0 3.2 1.400000000000001 3.2 3.2v21.6c0 1.8-1.4 3.2-3.2 3.2H3.2C1.4 31 0 29.6 0 27.8V6.2C0 4.4 1.4 3 3.2 3h1.6zM3.4 9.3v18.300000000000001h21.2V9.3z"/><path fill="#fff" d="M9.7 12.4h8.6v1.2c0 2-1.6 3.4-3 5c1.4 1.600000000000001 3 3 3 5v1.4H9.7v-1.4c0-2 1.6-3.4 3-5c-1.4-1.6-3-3-3-5z"/></svg>
<svg class="b" style="left:143px;top:133.7px;" width="29.5" height="32.7" viewBox="0 0 28 31"><path fill="#d9f6f9" fill-rule="evenodd" d="M4.8 0h3.2v3h12v-3h3.2v3h1.6c1.8 0 3.2 1.400000000000001 3.2 3.2v21.6c0 1.8-1.4 3.2-3.2 3.2H3.2C1.4 31 0 29.6 0 27.8V6.2C0 4.4 1.4 3 3.2 3h1.6zM3.4 9.3v18.300000000000001h21.2V9.3z"/><path fill="#d9f6f9" d="M9.7 12.4h8.6v1.2c0 2-1.6 3.4-3 5c1.4 1.600000000000001 3 3 3 5v1.4H9.7v-1.4c0-2 1.6-3.4 3-5c-1.4-1.6-3-3-3-5z"/></svg>
<svg class="b" style="left:29px;top:880px;" width="32" height="33" viewBox="0 0 32 33"><g fill="#c5daf2"><path d="M5.9 27.8A15.4 15.4 0 0 1 3.5 8.5l.5-3.300000000000001 3.4-.1A15.4 15.4 0 0 1 27.6 5.9z"/><path d="M15.6 18.1l2.4-2.4 13.2 13.4-2.4 2.4z"/></g></svg>
<svg class="b" style="left:32.4px;top:961px;" width="26" height="32" viewBox="0 0 25.2 31.6"><path fill="#c5daf2" d="M3 0h19.2c1.7 0 3 1.3 3 3v19.5l-9.1 9.1H3c-1.7 0-3-1.3-3-3V3C0 1.3 1.3 0 3 0z"/><g fill="#233d54"><rect x="4.800000000000001" y="13" width="2.5" height="8.8"/><rect x="11.2" y="10" width="2.5" height="11.8"/><rect x="17.5" y="7" width="2.6" height="14.8"/></g></svg>
<svg class="b" style="left:32.4px;top:1041px;" width="26" height="32" viewBox="0 0 25.6 31.4"><path fill="none" stroke="#c5daf2" stroke-width="2.6" d="M1.3 28V4.2c0-1.6 1.300000000000001-2.9 2.9-2.9H22"/><rect x="6.4" y="6.4" width="19.2" height="25" rx="2.6" fill="#c5daf2"/></svg>
<svg class="b" style="left:29px;top:1128px;" width="32" height="22" viewBox="0 0 32 22"><g fill="#c5daf2"><circle cx="10" cy="5.2" r="5.2"/><circle cx="21" cy="5.2" r="5.2"/><path d="M0 21.6c0-6 4.5-9.4 10-9.4s10 3.4 10 9.4z"/><path d="M19.5 12.400000000000001c.5-.1 1-.2 1.5-.2c5.500000000000002 0 10 3.4 10 9.4h-8.4c0-4-1.3-7.200000000000001-3.1-9.2z"/></g></svg>
<svg class="b" style="left:2399px;top:25px;" width="42" height="42" viewBox="0 0 42 42"><g fill="none" stroke="#c5d9f1" stroke-width="3.6"><circle cx="17" cy="17.3" r="13.2"/><path d="M26.6 27l11 11" stroke-linecap="round" stroke-width="4"/></g></svg>
<svg class="b" style="left:2494px;top:24px;" width="46" height="46" viewBox="0 0 46 46"><circle cx="22.8" cy="22.6" r="20.4" fill="none" stroke="#c5d9f1" stroke-width="3.8"/><circle cx="22.8" cy="22.6" r="15.8" fill="#c5d9f1"/></svg>
<div class="t" style="left:2507.9px;top:33px;font-size:29px;color:#0c5a9d;font-weight:700;">?</div>
<svg class="b" style="left:2599px;top:27px;" width="32" height="39" viewBox="0 0 32 39"><g fill="#c5d9f1"><rect x="13.300000000000001" y="1" width="5.4" height="4" rx="1.6"/><path d="M16 3.6c6 0 10.4 4.6 10.4 11v13.6h4.4v3.300000000000001H1.2v-3.3h4.4V14.6c0-6.4 4.4-11 10.4-11z"/><rect x="10.6" y="34" width="10.8" height="4"/></g></svg>
<svg class="b" style="left:2687px;top:17px;" width="62" height="62" viewBox="0 0 62 62"><defs><clipPath id="av"><circle cx="31" cy="31" r="28.6"/></clipPath></defs>
<circle cx="31" cy="31" r="29.6" fill="#9adad3" stroke="#a5a5a5" stroke-width="2.4"/>
<g clip-path="url(#av)">
<path d="M9 62c0-8 6-10 13-12.500000000000002l9-2 9 2c7 2.5 13 4.5 13 12.5z" fill="#141414"/>
<path d="M25 47.5h12l-3 14.5h-6z" fill="#fff"/>
<path d="M27 45h8v5l-4 3-4-3z" fill="#e2a05c"/>
<path d="M29.7 50.5h2.6l1.3 11.5h-5.2z" fill="#c62828"/>
<ellipse cx="31" cy="30" rx="10.6" ry="12.5" fill="#eeb270"/>
<path d="M31 17.5v25c-6.500000000000002 0-10.6-5.6-10.6-12.5S24.5 17.5 31 17.5z" fill="#e5a25c"/>
<path d="M19.8 27c-1-8.5 3.8-15 11.2-15s12.200000000000001 6.5 11.2 15c-.4-3.6-1.6-6-3.2-7H23c-1.600000000000001 1-2.8 3.4-3.2 7z" fill="#141414"/>
<path d="M31 12c7.4 0 12.200000000000001 6.5 11.2 15c-.4-3.6-1.6-6-3.2-7h-8z" fill="#2a2a2a"/>
<path d="M20.4 30c1.6 2.6 2.6 4.200000000000001 5.6 4.6c2-.4 3.4-1.4 5-1.4s3 1 5 1.4c3-.4 4-2 5.600000000000001-4.600000000000001c.6 8.400000000000002-3.2 15.400000000000002-10.600000000000001 15.400000000000002S19.8 38.4 20.4 30z" fill="#141414"/>
<rect x="28.4" y="35.6" width="5.2" height="1.6" rx=".8" fill="#c98a4e"/>
<ellipse cx="19.9" cy="31" rx="1.5" ry="2.6" fill="#e5a25c"/><ellipse cx="42.1" cy="31" rx="1.5" ry="2.6" fill="#eeb270"/>
</g></svg>
<svg class="b" style="left:2496px;top:140px;" width="30" height="30" viewBox="0 0 30 30"><g fill="#3f3f3f"><rect x="11" y="1.3" width="7.200000000000001" height="26.8" rx="2"/><rect x="1.1" y="11.2" width="26.9" height="7.1" rx="2"/></g></svg>
<svg class="b" style="left:2543px;top:138px;" width="37" height="37" viewBox="0 0 37 37"><g fill="none" stroke="#3f3f3f" stroke-width="2.3" stroke-linejoin="round"><path d="M13 25.9H2.3V10L10.2 2.3h11.6v6.6"/><path d="M2.5 10.2h8v-7.600000000000001"/><path d="M14.5 16.2l7.2-6.9h12.3v24.4H14.5z"/><path d="M14.7 16.5h7.3v-7"/></g></svg>
<svg class="b" style="left:2597px;top:140px;" width="32" height="32" viewBox="0 0 32 32"><circle cx="15.6" cy="15.8" r="12.5" fill="none" stroke="#3f3f3f" stroke-width="4"/><path d="M9 15.6l4.800000000000001 4.800000000000001 8-8.200000000000001" fill="none" stroke="#3f3f3f" stroke-width="4"/></svg>
<svg class="b" style="left:2646px;top:140px;" width="32" height="32" viewBox="0 0 32 32"><circle cx="15.8" cy="15.8" r="12.5" fill="none" stroke="#3f3f3f" stroke-width="4"/><path d="M11.4 11.4l8.8 8.8M20.2 11.4l-8.8 8.8" fill="none" stroke="#3f3f3f" stroke-width="4.4"/></svg>
<svg class="b" style="left:2695px;top:140px;" width="32" height="32" viewBox="0 0 32 32"><g fill="none" stroke="#3f3f3f" stroke-width="4.2"><path d="M3.3 12.5A12.5 12.5 0 0 1 25.8 7.4"/><path d="M28.5 19.3A12.5 12.5 0 0 1 6 24.4"/></g><g fill="#3f3f3f"><path d="M30.400000000000002 1.6v10.8H19.6z"/><path d="M1.4 30.2V19.4h10.8z"/></g></svg>
<svg class="b" style="left:2744px;top:140px;" width="34" height="32" viewBox="0 0 34 32"><g fill="#3f3f3f"><path d="M3.600000000000001 13.4h26.400000000000002c1.8 0 3 1.2 3 3v9.2h-5.200000000000001v-5.800000000000001H6v5.800000000000001H.8v-9.2c0-1.8 1.2-3 2.8-3z"/></g><g fill="none" stroke="#3f3f3f" stroke-width="2.2"><path d="M7.2 13V2.4h14.4l5 5V13"/><path d="M7.2 21.5v8h19.400000000000002v-8"/><path d="M21.2 2.600000000000001v5.200000000000001h5.200000000000001"/></g><circle cx="29" cy="17" r="1.3" fill="#d9f6f9"/></svg>
<svg class="b" style="left:2796px;top:138px;" width="42" height="36" viewBox="0 0 42 36"><g fill="none" stroke="#3f3f3f" stroke-linejoin="round"><path d="M18.600000000000001 3.2h18.8v18.4H27" stroke-width="4.6"/><path d="M18.6 5.200000000000001v6" stroke-width="4.6"/><rect x="3.4" y="13.4" width="19.6" height="19.200000000000003" stroke-width="5" rx=".6"/></g><rect x="2.8" y="11.2" width="21" height="8.200000000000001" fill="#3f3f3f"/></svg>
<svg class="b" style="left:1832px;top:242px;" width="28" height="28" viewBox="0 0 28 28"><g fill="none" stroke="#333" stroke-width="2.2"><path d="M8.2 2.5h17.3v17.3h-9"/><rect x="2.7" y="9.7" width="10.8" height="15.8" stroke-width="2.4"/><path d="M2.7 15h10.8M2.7 20.2h10.8"/></g></svg>
<svg class="b" style="left:1894px;top:243px;" width="28" height="28" viewBox="0 0 28 28"><g fill="none" stroke="#999" stroke-width="2.8"><circle cx="11.7" cy="11.5" r="8.4"/><path d="M17.600000000000001 17.6l7.2 7.2" stroke-width="3.4"/></g></svg>
<svg class="b" style="left:224.89999999999998px;top:471.3px;" width="25" height="20" viewBox="0 0 25 20"><path fill="#f4f1ff" d="M1.8 0h7.4c.6 0 1 .2 1.4.7l2.600000000000001 3H23c1 0 1.8.8 1.8 1.8v12.3c0 1-.8 1.8-1.8 1.8H1.8c-1 0-1.8-.8-1.8-1.800000000000001V1.8C0 .8.8 0 1.8 0z"/></svg>
<svg class="b" style="left:224.89999999999998px;top:539.3px;" width="25" height="20" viewBox="0 0 25 20"><path fill="#f4f1ff" d="M1.8 0h7.4c.6 0 1 .2 1.4.7l2.600000000000001 3H23c1 0 1.8.8 1.8 1.8v12.3c0 1-.8 1.8-1.8 1.8H1.8c-1 0-1.8-.8-1.8-1.800000000000001V1.8C0 .8.8 0 1.8 0z"/></svg>
<svg class="b" style="left:224.7px;top:606.5px;" width="23" height="21" viewBox="0 0 23 21"><g fill="none" stroke="#fff" stroke-width="2.5"><circle cx="5.6" cy="5.6" r="4"/><path d="M8.6 8.2l11 9.8M13.8 13l2.9-3.200000000000001M17.3 16.2l2.4-2.600000000000001"/></g></svg>
<svg class="b" style="left:224.7px;top:674.5px;" width="23" height="21" viewBox="0 0 23 21"><g fill="none" stroke="#fff" stroke-width="2.5"><circle cx="5.6" cy="5.6" r="4"/><path d="M8.6 8.2l11 9.8M13.8 13l2.9-3.200000000000001M17.3 16.2l2.4-2.600000000000001"/></g></svg>
<svg class="b" style="left:224.89999999999998px;top:743.3px;" width="25" height="20" viewBox="0 0 25 20"><path fill="#f4f1ff" d="M1.8 0h7.4c.6 0 1 .2 1.4.7l2.600000000000001 3H23c1 0 1.8.8 1.8 1.8v12.3c0 1-.8 1.8-1.8 1.8H1.8c-1 0-1.8-.8-1.8-1.800000000000001V1.8C0 .8.8 0 1.8 0z"/></svg>
<svg class="b" style="left:224.89999999999998px;top:811.3px;" width="25" height="20" viewBox="0 0 25 20"><path fill="#f4f1ff" d="M1.8 0h7.4c.6 0 1 .2 1.4.7l2.600000000000001 3H23c1 0 1.8.8 1.8 1.8v12.3c0 1-.8 1.8-1.8 1.8H1.8c-1 0-1.8-.8-1.8-1.800000000000001V1.8C0 .8.8 0 1.8 0z"/></svg>
<svg class="b" style="left:225.2px;top:879.5px;" width="24" height="19" viewBox="0 0 24 19"><g fill="#fff5cc"><rect x="7" y="1.3" width="16.6" height="2.4"/><rect x="7" y="8.200000000000001" width="16.6" height="2.4"/><rect x="7" y="15" width="16.6" height="2.4"/><circle cx="2.4" cy="16.2" r="1.9"/></g><g fill="none" stroke="#fff5cc" stroke-width="1.5"><path d="M.4 2.4l1.5 1.5l2.800000000000001-3"/><path d="M.4 9.3l1.5 1.5l2.8-3"/></g></svg>
</div>
</body></html>
